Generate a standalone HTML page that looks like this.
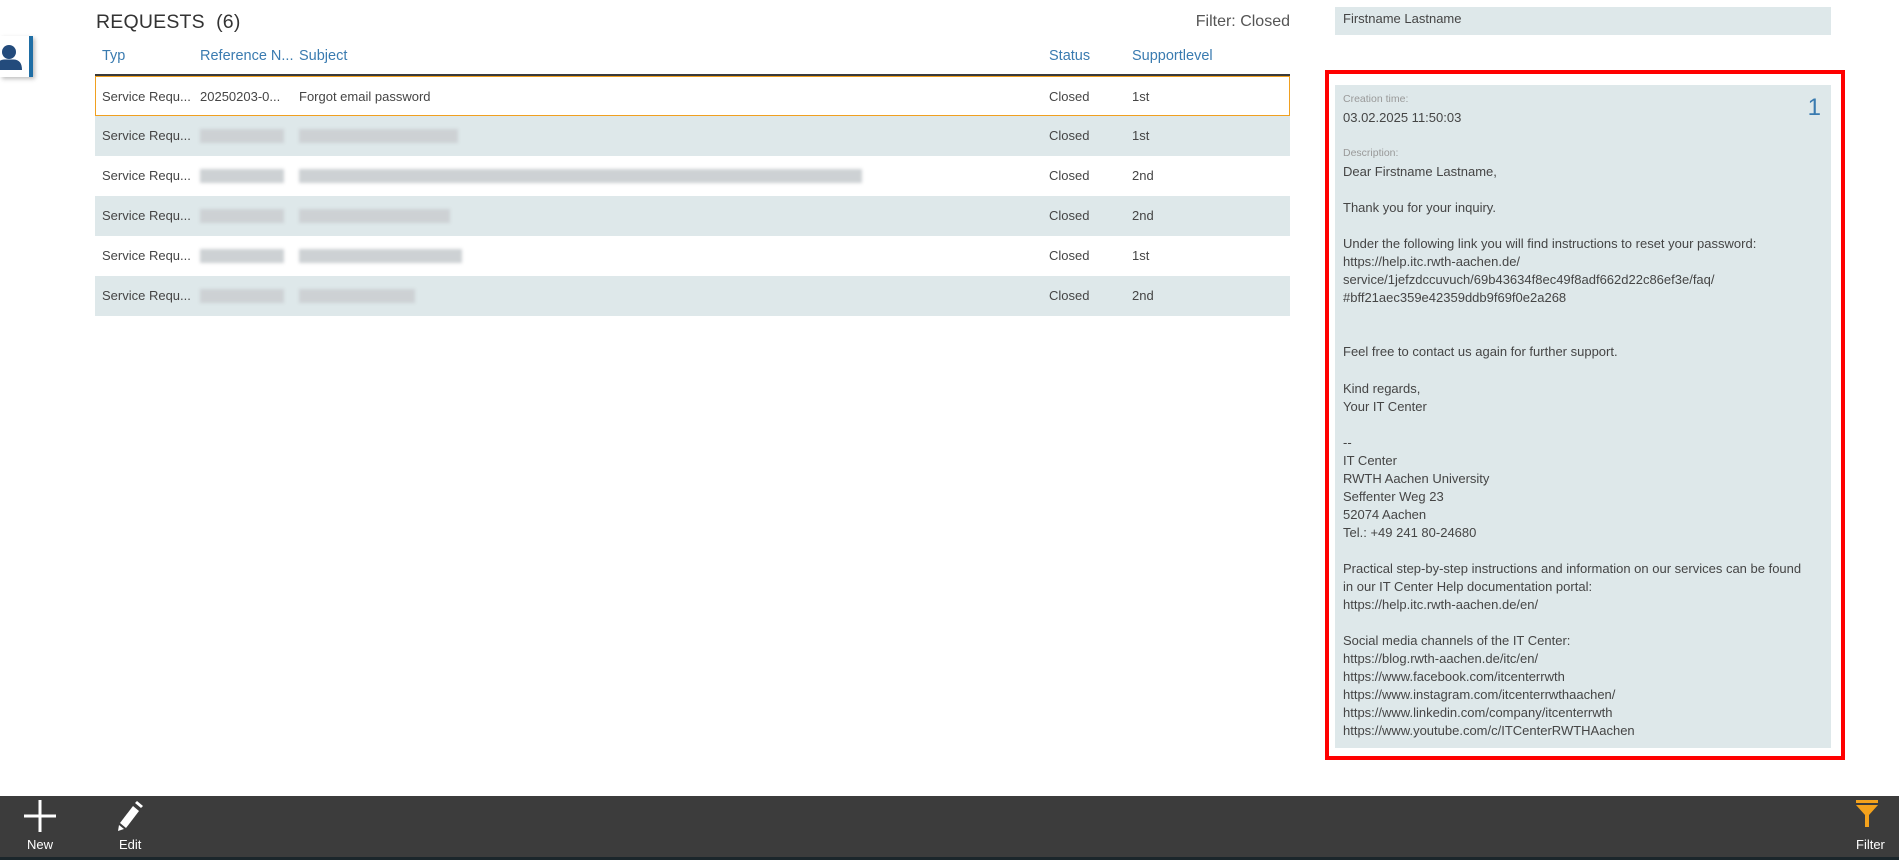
<!DOCTYPE html>
<html><head><meta charset="utf-8"><style>
*{margin:0;padding:0;box-sizing:border-box}
body{width:1899px;height:860px;position:relative;background:#fff;font-family:"Liberation Sans",sans-serif;color:#454545;overflow:hidden}
.abs{position:absolute}
.title{left:96px;top:11px;font-size:19.5px;color:#333;letter-spacing:0.2px;font-weight:normal}
.filt{right:609px;top:13px;font-size:16px;color:#555}
.th{top:48px;font-size:14.5px;color:#3a7bb0}
.hline{left:95px;width:1195px;top:74px;height:2px;background:#3a3a3a}
.row{position:absolute;left:95px;width:1195px;height:40px;font-size:13px;line-height:40px}
.row.alt{background:#dee8ea}
.row span{position:absolute;top:0}
.sel{border:1px solid #f0a020}
.blur{position:absolute;top:13px;height:14px;background:#cdd1d4;filter:blur(1.5px)}
.box{background:#dee8ea}
.txt{font-size:13px;line-height:18.05px;white-space:pre;color:#454545}
.lbl{font-size:10.5px;color:#999}
.bar{left:0;top:796px;width:1899px;height:61px;background:#3c3c3c}
.bot{left:0;top:857px;width:1899px;height:3px;background:#1b262b}
.bl{font-size:13px;color:#fff;top:837px}
</style></head><body>

<div class="abs" style="left:0;top:36px;width:33px;height:41px;background:#fff;box-shadow:2px 2px 4px rgba(0,0,0,.25);border-right:4px solid #1f6ea5">
<svg width="29" height="41" viewBox="0 0 29 41"><circle cx="9" cy="16" r="7" fill="#234b7c"/><path d="M-4 34 Q-4 24 4 23.5 L14 23.5 Q22 24 22 34 Z" fill="#234b7c"/></svg>
</div>

<div class="abs title">REQUESTS &nbsp;(6)</div>
<div class="abs filt">Filter: Closed</div>
<div class="abs th" style="left:102px">Typ</div>
<div class="abs th" style="left:200px">Reference N...</div>
<div class="abs th" style="left:299px">Subject</div>
<div class="abs th" style="left:1049px">Status</div>
<div class="abs th" style="left:1132px">Supportlevel</div>
<div class="abs hline"></div>

<div class="row sel" style="top:76px"><span style="left:6px">Service Requ...</span><span style="left:104px">20250203-0...</span><span style="left:203px">Forgot email password</span><span style="left:953px">Closed</span><span style="left:1036px">1st</span></div>
<div class="row alt" style="top:116px"><span style="left:7px">Service Requ...</span><div class="blur" style="left:105px;width:84px"></div><div class="blur" style="left:204px;width:159px"></div><span style="left:954px">Closed</span><span style="left:1037px">1st</span></div>
<div class="row" style="top:156px"><span style="left:7px">Service Requ...</span><div class="blur" style="left:105px;width:84px"></div><div class="blur" style="left:204px;width:563px"></div><span style="left:954px">Closed</span><span style="left:1037px">2nd</span></div>
<div class="row alt" style="top:196px"><span style="left:7px">Service Requ...</span><div class="blur" style="left:105px;width:84px"></div><div class="blur" style="left:204px;width:151px"></div><span style="left:954px">Closed</span><span style="left:1037px">2nd</span></div>
<div class="row" style="top:236px"><span style="left:7px">Service Requ...</span><div class="blur" style="left:105px;width:84px"></div><div class="blur" style="left:204px;width:163px"></div><span style="left:954px">Closed</span><span style="left:1037px">1st</span></div>
<div class="row alt" style="top:276px"><span style="left:7px">Service Requ...</span><div class="blur" style="left:105px;width:84px"></div><div class="blur" style="left:204px;width:116px"></div><span style="left:954px">Closed</span><span style="left:1037px">2nd</span></div>

<div class="abs box" style="left:1335px;top:7px;width:496px;height:28px"><div class="txt" style="position:absolute;left:8px;top:3px">Firstname Lastname</div></div>

<div class="abs" style="left:1325px;top:70px;width:520px;height:690px;border:4px solid #ff0000"></div>
<div class="abs box" style="left:1335px;top:85px;width:496px;height:663px">
<div class="abs lbl" style="left:8px;top:8px">Creation time:</div>
<div class="abs txt" style="left:8px;top:24px">03.02.2025 11:50:03</div>
<div class="abs" style="right:10px;top:9px;font-size:24px;color:#3a7bb0">1</div>
<div class="abs lbl" style="left:8px;top:62px">Description:</div>
<div class="abs txt" style="left:8px;top:78px">Dear Firstname Lastname,

Thank you for your inquiry.

Under the following link you will find instructions to reset your password:
https://help.itc.rwth-aachen.de/
service/1jefzdccuvuch/69b43634f8ec49f8adf662d22c86ef3e/faq/
#bff21aec359e42359ddb9f69f0e2a268


Feel free to contact us again for further support.

Kind regards,
Your IT Center

--
IT Center
RWTH Aachen University
Seffenter Weg 23
52074 Aachen
Tel.: +49 241 80-24680

Practical step-by-step instructions and information on our services can be found
in our IT Center Help documentation portal:
https://help.itc.rwth-aachen.de/en/

Social media channels of the IT Center:
https://blog.rwth-aachen.de/itc/en/
https://www.facebook.com/itcenterrwth
https://www.instagram.com/itcenterrwthaachen/
https://www.linkedin.com/company/itcenterrwth
https://www.youtube.com/c/ITCenterRWTHAachen</div>
</div>

<div class="abs bar"></div>
<div class="abs bot"></div>
<svg class="abs" style="left:24px;top:800px" width="32" height="32"><rect x="14.5" y="0" width="3" height="32" fill="#fff"/><rect x="0" y="14.5" width="32" height="3" fill="#fff"/></svg>
<div class="abs bl" style="left:27px">New</div>
<svg class="abs" style="left:116px;top:800px" width="28" height="32" viewBox="0 0 28 32"><path d="M17 6 L23 11 L10 28 L4 23 Z" fill="#fff"/><path d="M19 3 L21 1 L27 6 L25 8 Z" fill="#fff"/><path d="M3 25 L8 29 L2 31 Z" fill="#fff"/></svg>
<div class="abs bl" style="left:119px">Edit</div>
<svg class="abs" style="left:1856px;top:800px" width="22" height="28" viewBox="0 0 22 28"><rect x="0" y="0" width="22" height="3" fill="#f4a21c"/><path d="M0 5 L22 5 L13 15 L13 27 L9 27 L9 15 Z" fill="#f4a21c"/></svg>
<div class="abs bl" style="left:1856px">Filter</div>
</body></html>
